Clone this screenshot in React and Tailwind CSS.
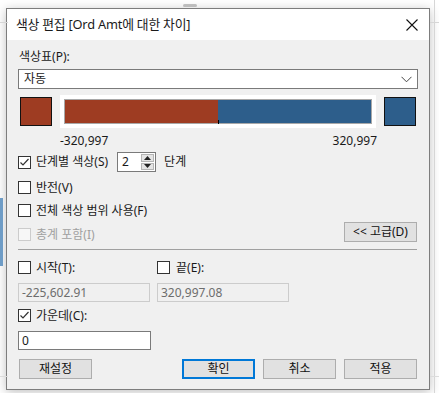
import React from "react";

const font = { fontFamily: "'Segoe UI', 'Noto Sans', 'Noto Sans CJK KR', sans-serif" };

function Check({ checked, disabled }) {
  return (
    <div
      className={
        "w-[13px] h-[13px] shrink-0 border flex items-center justify-center " +
        (disabled ? "border-[#cccccc] bg-[#f7f7f7]" : "border-[#333333] bg-white")
      }
    >
      {checked && (
        <svg width="11" height="11" viewBox="0 0 11 11">
          <path d="M1.5 5.5 L4 8 L9.5 2" fill="none" stroke="#333333" strokeWidth="1.2" />
        </svg>
      )}
    </div>
  );
}

function Btn({ children, primary, className = "" }) {
  return (
    <div
      className={
        "h-[20px] flex items-center justify-center text-[12px] text-[#111] bg-[#e1e1e1] " +
        (primary ? "border-2 border-[#0078d7]" : "border border-[#adadad]") +
        " " +
        className
      }
    >
      {children}
    </div>
  );
}

export default function App() {
  return (
    <div className="relative w-[439px] h-[393px] bg-white overflow-hidden" style={font}>
      {/* background desktop bits */}
      <div className="absolute left-0 top-[22px] w-[8px] h-px bg-[#d6d6d6]" />
      <div className="absolute right-0 top-[22px] w-[9px] h-px bg-[#d6d6d6]" />
      <div className="absolute left-[434px] top-0 w-px h-[393px] bg-[#d6d6d6]" />
      <div className="absolute left-0 top-[198px] w-[3px] h-[68px] bg-[#6e9cc6]" />
      <div className="absolute left-0 top-[376px] w-[8px] h-px bg-[#dcdcdc]" />
      <div className="absolute right-0 top-[376px] w-[9px] h-px bg-[#dcdcdc]" />
      <div className="absolute left-[183px] top-[4px] w-[14px] h-[3px] bg-[#9a9a9a] rounded-full opacity-60" />

      <div className="pt-[8px] pl-[6px]">
        <div className="w-[424px] h-[382px] border border-[#7d7d7d] bg-[#f0f0f0] shadow-[0_2px_10px_rgba(0,0,0,0.25)] flex flex-col">
          {/* title bar */}
          <div className="h-[31px] bg-white flex items-center justify-between pl-[9px] pr-[8px]">
            <span className="text-[12.8px] text-[#1a1a1a] tracking-[-0.2px]">색상 편집 [Ord Amt에 대한 차이]</span>
            <svg width="14" height="14" viewBox="0 0 14 14" className="mr-[2px]">
              <path d="M1.5 1.5 L12.5 12.5 M12.5 1.5 L1.5 12.5" stroke="#111" strokeWidth="1.1" />
            </svg>
          </div>

          {/* body */}
          <div className="flex flex-col px-[11px] text-[12px] text-[#1a1a1a]">
            <div className="mt-[9px] h-[16px] flex items-center pl-[1px]">색상표(P):</div>

            <div className="mt-[4px] h-[20px] bg-white border border-[#7a7a7a] flex items-center justify-between pl-[5px] pr-[5px]">
              <span>자동</span>
              <svg width="11" height="7" viewBox="0 0 11 7">
                <path d="M0.5 0.8 L5.5 5.8 L10.5 0.8" fill="none" stroke="#444" strokeWidth="1" />
              </svg>
            </div>

            <div className="mt-[6px] h-[33px] flex items-center">
              <div className="ml-[2px] w-[32px] h-[29px] bg-[#9e3c22] border border-[#111]" />
              <div className="ml-[8px] w-[316px] h-[33px] bg-white p-[4px]">
                <div className="w-full h-full border border-[#a8a8a8] flex relative">
                  <div className="w-[153px] h-full bg-[#9e3c22]" />
                  <div className="flex-1 h-full bg-[#2d5e8b]" />
                  <div className="absolute left-[153px] bottom-[-1px] w-px h-[4px] bg-black" />
                </div>
              </div>
              <div className="ml-[8px] w-[32px] h-[29px] bg-[#2d5e8b] border border-[#111]" />
            </div>

            <div className="mt-[6px] h-[14px] flex items-center justify-between pl-[42px] pr-[41px]">
              <span>-320,997</span>
              <span>320,997</span>
            </div>

            <div className="mt-[4px] h-[20px] flex items-center">
              <div className="ml-[0px]"><Check checked /></div>
              <span className="ml-[5px]">단계별 색상(S)</span>
              <div className="ml-[9px] w-[39px] h-[20px] bg-white border border-[#7a7a7a] flex">
                <div className="flex-1 flex items-center pl-[4px]">2</div>
                <div className="w-[15px] flex flex-col p-[1px] gap-[1px]">
                  <div className="flex-1 bg-[#e4e4e4] border border-[#b4b4b4] flex items-center justify-center">
                    <svg width="7" height="4" viewBox="0 0 7 4"><path d="M0 4 L3.5 0 L7 4 Z" fill="#222" /></svg>
                  </div>
                  <div className="flex-1 bg-[#e4e4e4] border border-[#b4b4b4] flex items-center justify-center">
                    <svg width="7" height="4" viewBox="0 0 7 4"><path d="M0 0 L3.5 4 L7 0 Z" fill="#222" /></svg>
                  </div>
                </div>
              </div>
              <span className="ml-[8px]">단계</span>
            </div>

            <div className="mt-[7px] h-[17px] flex items-center">
              <Check />
              <span className="ml-[5px]">반전(V)</span>
            </div>

            <div className="mt-[6px] h-[17px] flex items-center">
              <Check />
              <span className="ml-[5px]">전체 색상 범위 사용(F)</span>
            </div>

            <div className="mt-[2px] h-[21px] flex items-end justify-between">
              <div className="h-[17px] flex items-center mb-[-1px]">
                <Check disabled />
                <span className="ml-[5px] text-[#a0a0a0]">총계 포함(I)</span>
              </div>
              <Btn className="w-[73px] mr-[1px]">&lt;&lt; 고급(D)</Btn>
            </div>

            <div className="mt-[7px] h-px bg-[#a0a0a0] mr-[1px]" />

            <div className="mt-[9px] h-[17px] flex items-center">
              <div className="w-[139px] flex items-center">
                <Check />
                <span className="ml-[5px]">시작(T):</span>
              </div>
              <Check />
              <span className="ml-[6px]">끝(E):</span>
            </div>

            <div className="mt-[7px] h-[19px] flex gap-[7px]">
              <div className="w-[132px] h-full border border-[#cccccc] bg-[#f0f0f0] flex items-center pl-[3px] text-[#6d6d6d]">-225,602.91</div>
              <div className="w-[132px] h-full border border-[#cccccc] bg-[#f0f0f0] flex items-center pl-[3px] text-[#6d6d6d]">320,997.08</div>
            </div>

            <div className="mt-[5px] h-[17px] flex items-center">
              <Check checked />
              <span className="ml-[5px]">가운데(C):</span>
            </div>

            <div className="mt-[7px] w-[133px] h-[19px] bg-white border border-[#7a7a7a] flex items-center pl-[3px]">0</div>

            <div className="mt-[9px] h-[20px] flex items-center">
              <Btn className="ml-[1px] w-[73px]">재설정</Btn>
              <Btn primary className="ml-[90px] w-[73px]">확인</Btn>
              <Btn className="ml-[8px] w-[73px]">취소</Btn>
              <Btn className="ml-[8px] w-[73px]">적용</Btn>
            </div>
          </div>
        </div>
      </div>
    </div>
  );
}
